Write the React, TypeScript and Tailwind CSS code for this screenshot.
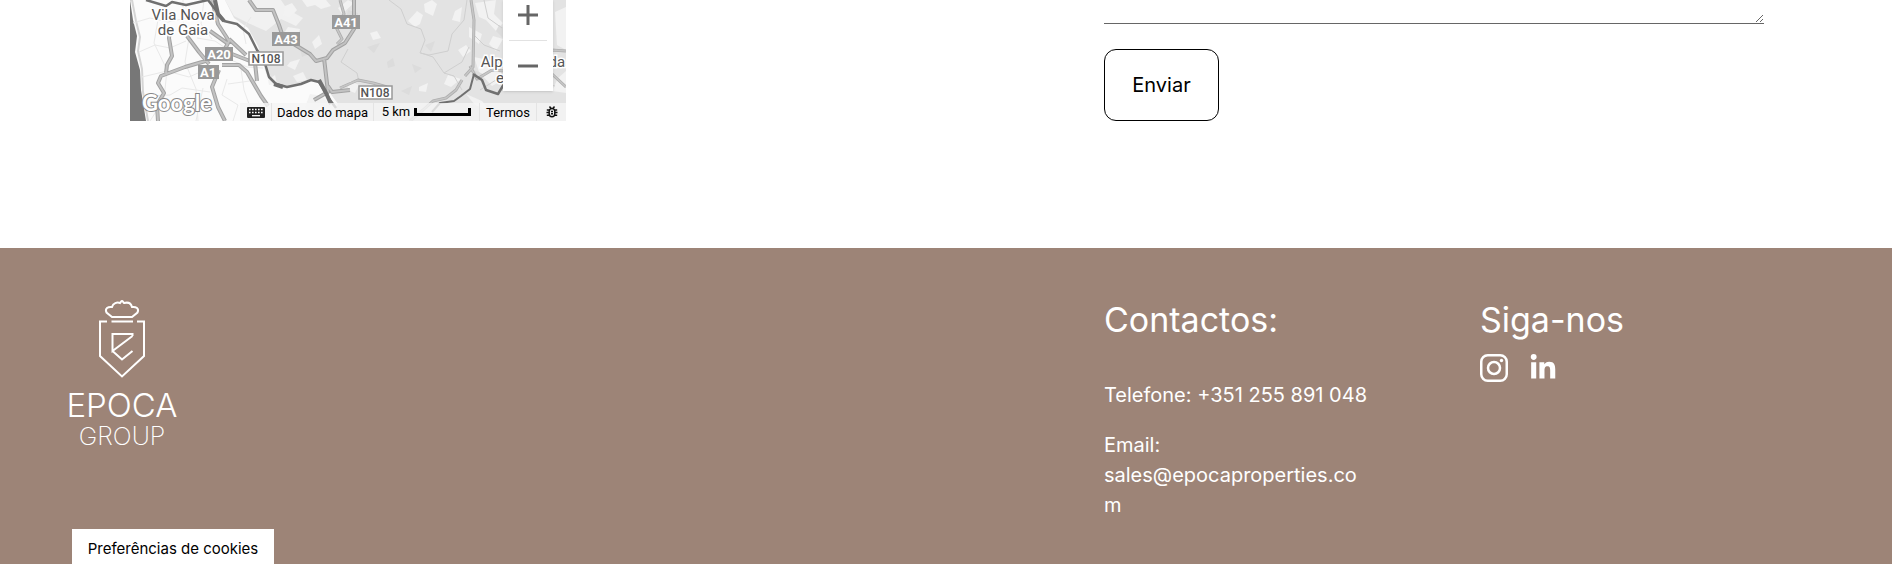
import React from 'react';
import { FaLinkedinIn } from 'react-icons/fa';

const highways =
  'M41 27 39 38 42 56 37 65 36 73M57 36l12 16 10 12M82 0l6 24 11 17-4 8 3 7M80 31l17 12M28 121l-1-16 7-12-6-10 3-7 24-9 24-7M102 54l23 9 2 18M89 70l-7 17 6 20 7 14M92 65l17 0 8 7 14 24 7 10M99 39l17 16M119 0l7 10 17 0 6 15 3 9 7 3M162 43l18 11 6 7 11-3 6-8 12-7 9-14V0M194 58l4 34-14 8M198 86l4 6 18-2';
const regional =
  'M210 0l4 14-8 13 6 12-5 5M341 0l3 20-1 47-8 9M210 88l18-8 15 3 14 4M340 66l7 13 15-9 13 1 20-6M401 56l20-6 15 1M408 76l14-2 14 13M332 80l-6 10-10 8-13 3-10 9-13 11';

function MapDrawing() {
  return (
    <svg viewBox="0 0 436 121" preserveAspectRatio="xMidYMax slice" className="absolute inset-0 h-full w-full" role="img" aria-label="Mapa" fontFamily="Roboto, sans-serif">
      <rect width="436" height="121" fill="#fbfbfb" />
      <path d="M95 0 104 18 118 28 128 46 132 60 137 76 144 85 160 87 185 80 200 93 208 104 200 121H436V0Z" fill="#e3e3e3" />
      <path d="M95 0h56l6 9 16 9-7 8-15-7-15 12-18-8-14-7Z" fill="#f1f1f1" />
      <g fill="#f2f2f2">
        <path d="M155 6 162 3 167 10 160 18 153 15ZM158 27l12 2-3 10-9 5-6-8ZM136 57l10-3 5 8-9 2ZM160 62l10-3-5 11-8-4ZM138 80l7-5 2 9-8 1ZM182 42l7-7 3 9-7 5ZM163 76l10-4 4 8-10 2Z" />
        <path d="M172 0h24l5 6-10 3-6-4-8 2ZM208 8l10-8 6 3-12 11ZM240 33l7-2 4 7-8 2ZM278 21l9-10 6 4-3 9-5 3ZM294 4l8-4 5 4-4 12-8-4ZM325 11l7-4-2 15-8-2ZM328 50l8-5 5 6-8 6ZM289 87l9-4-2 9-7-1Z" />
        <path d="M345 3l21-3-2 14 9 9-7 8-10-11-7-3ZM363 36l10 3-7 12-7-7ZM339 27l13 7-3 10-10-7ZM318 75l13 4-10 8-7-3ZM220 81l9 4-4 8-8-3ZM180 94l13 2 8 11-11-2-8 10-7-8Z" />
        <path d="M344 57l24 5 5 18-11 6-13-14ZM425 12l11-5V50l-9-5ZM428 78l8-7v22l-14-2ZM336 94l16 7 10 12-17-8Z" />
      </g>
      <g fill="#dcdcdc">
        <path d="M218 10l10 3-2 9-10-4ZM237 47l13-4-6 10ZM257 62l6-4 2 8-7 2ZM282 64l10 4-7 5ZM295 45l10-4-4 11ZM271 91l11-5-3 9ZM369 25l9 5-4 9-8-8ZM344 70l9 4-4 8-6-7ZM170 49l9 5-7 3Z" />
      </g>
      <path d="M0 0 3 20 7 36 5 52 10 70 11 90 16 121H0Z" fill="#777" />
      <path d="M0 0h2l4 21 4 16-2 14 4 18 1 23 5 29" fill="none" stroke="#d5d5d5" strokeWidth="2" />
      <path d="M3 23 20 18 38 22 61 17 88 21M9 52l16-7 15 3 16-7M12 77l25-6 22 6 18-8M15 96l25-1 12-7 28 4M20 121l14-22 3-29-13-27 5-29M53 0v21l6 17-4 24 11 27 2 32M74 0l-3 24 11 15M67 38l18 3 15 10M99 59l18 8 16 1M97 79l-5 16 16 10-5 16M98 84l29-4M121 17l-8 12 3 15M73 88l-7 33M111 69l3 21 11 31" fill="none" stroke="#e9e9e9" strokeWidth="1" />
      <path d="M259 0l12 9 6 15 14 5 4 11-5 13 9 2 19-4 4-17 12-14 3-20M291 53l12 4 11 16 10 3 8 14M314 73l18-11 7-15M354 0l4 18 14 10M344 35l10 10 16 6M218 49l-7 13 16 11 2 9M373 83l31-2 21 5M350 90l19-12" fill="none" stroke="#cfcfcf" strokeWidth="1" />
      <g fill="none" strokeLinejoin="round">
        <path d={highways} stroke="#a2a2a2" strokeWidth="4" />
        <path d={highways} stroke="#c2c2c2" strokeWidth="2" />
        <path d={regional} stroke="#adadad" strokeWidth="3" />
        <path d={regional} stroke="#c6c6c6" strokeWidth="1.500" />
      </g>
      <g fill="none" stroke="#707070" strokeLinejoin="round">
        <path d="M16 0 36 6 42 2 56 5 78 0 88 13 94 21 107 24 119 34 127 50 134 60 139 77 146 84 157 87 171 84 181 80 189 82 196 93 200 100 206 108" strokeWidth="2.500" />
        <path d="M85 0 88 14 94 21M189 80l7 13 5 11M144 84l9 3" strokeWidth="4" />
        <path d="M343 74 352 80 356 90 368 94 374 84" strokeWidth="2.500" />
        <path d="M344 74 340 89 331 96 324 101 310 103 302 112" strokeWidth="2" />
      </g>
      <g fontWeight="700" fontSize="13" textAnchor="middle" fill="#fff">
        <rect x="142" y="32" width="28" height="14" fill="#999" /><text x="156" y="44">A43</text>
        <rect x="75" y="47" width="28" height="14" fill="#999" /><text x="89" y="59">A20</text>
        <rect x="68" y="65" width="21" height="14" fill="#999" /><text x="78" y="77">A1</text>
        <rect x="202" y="15" width="28" height="14" fill="#999" /><text x="216" y="27">A41</text>
      </g>
      <g fontSize="12" fontWeight="500" textAnchor="middle" fill="#555">
        <rect x="119" y="52" width="34" height="13" fill="#fff" stroke="#999" strokeWidth="1.500" /><text x="136" y="63">N108</text>
        <rect x="229" y="86" width="33" height="13" fill="#fff" stroke="#999" strokeWidth="1.500" /><text x="245" y="97">N108</text>
      </g>
      <g fontSize="15" fill="#555" stroke="#fff" strokeWidth="3" paintOrder="stroke" textAnchor="middle">
        <text x="53" y="20">Vila Nova</text>
        <text x="53" y="35">de Gaia</text>
        <text x="393" y="67">Alpendurada</text>
        <text x="393" y="83">e Matos</text>
      </g>
      <text x="12" y="111" fontSize="22" fontFamily="Lato, sans-serif" fontWeight="700" fill="#fff" stroke="#888" strokeWidth="2" paintOrder="stroke">Google</text>
    </svg>
  );
}

function KeyboardIcon() {
  return (
    <svg viewBox="0 0 18 11" className="h-[11px] w-[18px]" aria-hidden="true">
      <rect width="18" height="11" rx="1" fill="#222" />
      <path d="M2 2.5h14M2 5.5h14" stroke="#fff" strokeWidth="1.6" strokeDasharray="1.6 1.4" />
      <path d="M5 8.7h8" stroke="#fff" strokeWidth="1.3" />
    </svg>
  );
}

function BugIcon() {
  return (
    <svg viewBox="0 0 12 12" className="h-3 w-3" fill="none" stroke="#111" strokeWidth="1.5" aria-hidden="true">
      <path d="M6 2.4c2 0 2.8 1.2 2.8 2.8v2.6C8.8 9.8 7.7 10.8 6 10.8s-2.8-1-2.8-3V5.2C3.2 3.6 4 2.4 6 2.4ZM3.5.5l1.5 2M8.5.5 7 2.5M.8 4h2.5M.5 6.6h2.7M.8 9.3h2.6M11.2 4H8.7M11.5 6.6H8.8M11.2 9.3H8.6M5 5.500h2M5 7.7h2" />
    </svg>
  );
}

function MapPanel() {
  return (
    <div className="relative flex h-[121px] w-[436px] flex-col items-end justify-between overflow-hidden">
      <MapDrawing />
      <div className="relative mr-[13px] flex w-[50px] flex-col items-center bg-white shadow">
        <button aria-label="Ampliar" className="flex h-10 w-full items-end justify-center pb-[15px]">
          <svg viewBox="0 0 20 20" className="h-5 w-5" aria-hidden="true"><path d="M10 0v20M0 10h20" stroke="#666" strokeWidth="3" /></svg>
        </button>
        <span className="h-px w-[38px] bg-[#e2e2e2]" />
        <button aria-label="Reduzir" className="flex h-[50px] w-full items-center justify-center">
          <svg viewBox="0 0 20 20" className="h-5 w-5" aria-hidden="true"><path d="M0 10h20" stroke="#666" strokeWidth="3" /></svg>
        </button>
      </div>
      <div className="relative flex h-[18px] w-[326px] items-center divide-x divide-[#e4e4e4] bg-[#f5f5f5]/80 font-[Roboto,sans-serif] text-[13px] leading-5 text-black">
        <button aria-label="Atalhos do teclado" className="flex h-full w-8 items-center justify-center"><KeyboardIcon /></button>
        <button className="h-full w-[102px] whitespace-nowrap">Dados do mapa</button>
        <button className="flex h-full w-[106px] items-center justify-center gap-1 whitespace-nowrap">
          5 km
          <span className="h-2 w-[57px] border-x-3 border-b-3 border-black" />
        </button>
        <a href="#termos" className="h-full w-[57px] text-center">Termos</a>
        <a href="#erro" aria-label="Comunicar um erro" className="flex h-full flex-1 items-center justify-center"><BugIcon /></a>
      </div>
    </div>
  );
}

function Logo() {
  return (
    <svg viewBox="0 0 126 150" className="h-[150px] w-[126px]" fill="none" stroke="#fff" strokeWidth="2" role="img" aria-label="Epoca Group">
      <path d="M53 17 47.500 12.500C45.500 8.500 49 6.500 53 7c1-4 5-5 8-4 1-1 1-2 2-2s1 1 2 2c4-1 7 0 8 4 4-.5 7.500 1.500 5.500 5.500L73 17Z" />
      <path d="M52.500 21.500H74M48 21.500H41V56L63 76.500 85 56V21.500H78" />
      <path d="M73.500 36V34H53.500V51L73.500 36M53.500 51 63 59.500 73.500 51" />
      <g fill="#fff" stroke="none" textAnchor="middle" fontFamily="Inter, sans-serif">
        <text x="63" y="117" fontSize="33" fontWeight="300">EPOCA</text>
        <text x="63" y="145" fontSize="25" fontWeight="200">GROUP</text>
      </g>
    </svg>
  );
}

function InstagramIcon() {
  return (
    <svg viewBox="0 0 28 28" className="h-7 w-7" fill="none" stroke="#fff" strokeWidth="2.500" aria-hidden="true">
      <rect x="1.250" y="1.250" width="25.500" height="25.500" rx="6.500" />
      <circle cx="14" cy="14" r="6" />
      <circle cx="21.500" cy="6.500" r="1.700" fill="#fff" stroke="none" />
    </svg>
  );
}

export default function App() {
  return (
    <div className="flex min-h-screen flex-col bg-white font-[Inter,sans-serif] text-black">
      <main className="flex justify-between gap-8 pr-32 pb-[127px] pl-[130px]">
        <MapPanel />
        <form className="flex w-[660px] flex-col items-start gap-[25px]" onSubmit={(e) => e.preventDefault()}>
          <textarea aria-label="Mensagem" className="block h-6 w-full resize-y border-b border-[#666] bg-white px-2 outline-none" />
          <button type="submit" className="h-[72px] w-[115px] rounded-xl border border-black text-[20px]">Enviar</button>
        </form>
      </main>
      <footer className="flex grow bg-[#9d8477] pt-[50px] pb-11 text-white">
        <div className="w-[58.35%] pt-0.5 pl-[59px]">
          <Logo />
        </div>
        <section className="w-[19.87%] pr-28">
          <h2 className="text-[34px] leading-[44px]">Contactos:</h2>
          <p className="mt-[38px] text-[20px] leading-[30px] whitespace-nowrap">Telefone: +351 255 891 048</p>
          <p className="mt-5 text-[20px] leading-[30px]">
            Email:<br />
            <a href="mailto:sales@epocaproperties.com" className="break-all">sales@epocaproperties.com</a>
          </p>
        </section>
        <section>
          <h2 className="text-[34px] leading-[44px]">Siga-nos</h2>
          <div className="mt-3 flex items-center gap-[21px]">
            <a href="#instagram" aria-label="Instagram"><InstagramIcon /></a>
            <a href="#linkedin" aria-label="LinkedIn"><FaLinkedinIn size={28} /></a>
          </div>
        </section>
      </footer>
      <button className="fixed bottom-0 left-[72px] h-[35px] w-[202px] bg-white pt-1.5 text-[15px] whitespace-nowrap">Preferências de cookies</button>
    </div>
  );
}
